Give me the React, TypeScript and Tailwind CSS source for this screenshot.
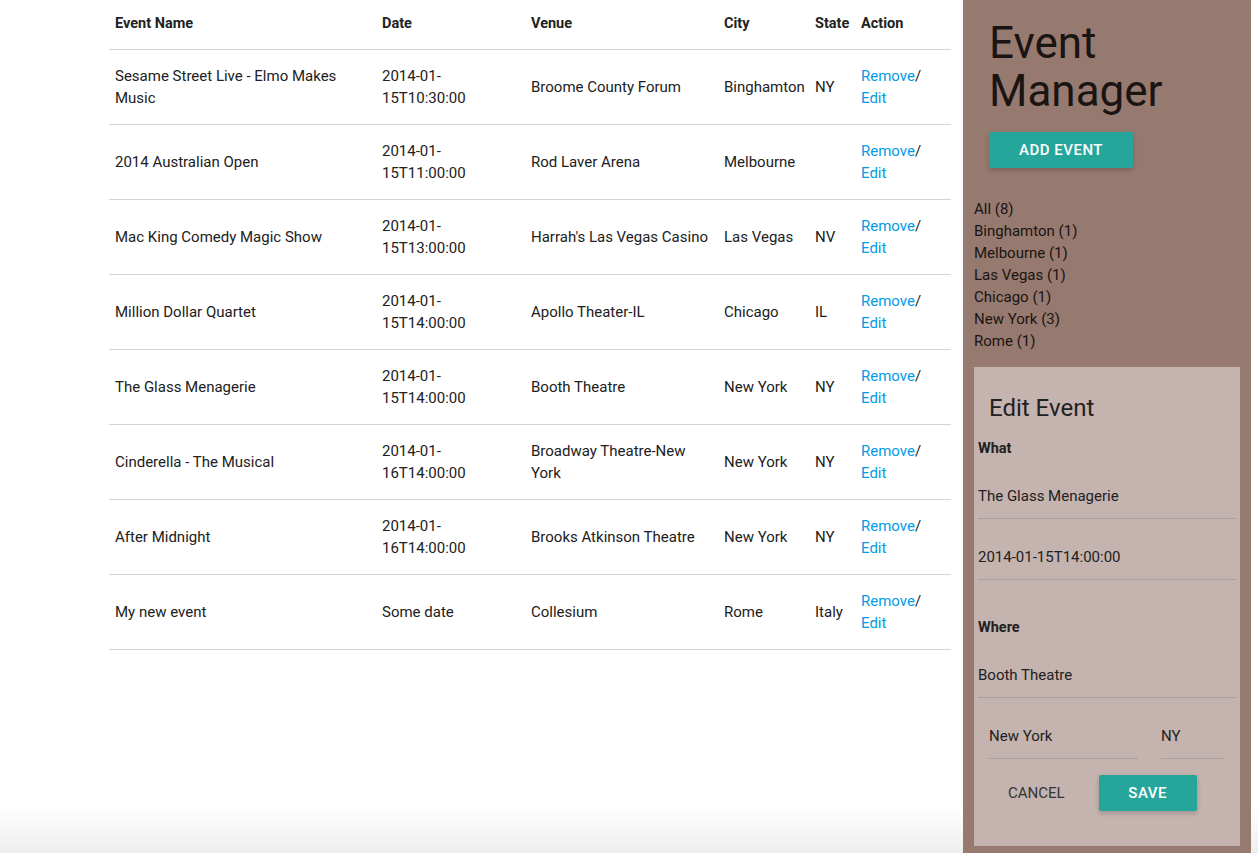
import React from 'react';

type Ev = { name: string; date: [string, string?]; venue: string; city: string; state: string };

const EVENTS: Ev[] = [
  { name: 'Sesame Street Live - Elmo Makes Music', date: ['2014-01-', '15T10:30:00'], venue: 'Broome County Forum', city: 'Binghamton', state: 'NY' },
  { name: '2014 Australian Open', date: ['2014-01-', '15T11:00:00'], venue: 'Rod Laver Arena', city: 'Melbourne', state: '' },
  { name: 'Mac King Comedy Magic Show', date: ['2014-01-', '15T13:00:00'], venue: "Harrah's Las Vegas Casino", city: 'Las Vegas', state: 'NV' },
  { name: 'Million Dollar Quartet', date: ['2014-01-', '15T14:00:00'], venue: 'Apollo Theater-IL', city: 'Chicago', state: 'IL' },
  { name: 'The Glass Menagerie', date: ['2014-01-', '15T14:00:00'], venue: 'Booth Theatre', city: 'New York', state: 'NY' },
  { name: 'Cinderella - The Musical', date: ['2014-01-', '16T14:00:00'], venue: 'Broadway Theatre-New York', city: 'New York', state: 'NY' },
  { name: 'After Midnight', date: ['2014-01-', '16T14:00:00'], venue: 'Brooks Atkinson Theatre', city: 'New York', state: 'NY' },
  { name: 'My new event', date: ['Some date'], venue: 'Collesium', city: 'Rome', state: 'Italy' },
];

const CITIES = ['All (8)', 'Binghamton (1)', 'Melbourne (1)', 'Las Vegas (1)', 'Chicago (1)', 'New York (3)', 'Rome (1)'];

const TextField = ({ value, className = '' }: { value: string; className?: string }) => (
  <div className={`h-[46px] flex items-center border-b border-[#a6a09e] ${className}`}>
    <span className="text-[15px] leading-[22px] text-[#212121]">{value}</span>
  </div>
);

const App: React.FC = () => {
  return (
    <div
      className="w-[1258px] h-[853px] overflow-hidden flex bg-[linear-gradient(to_bottom,#ffffff_94.5%,#eeeeee)] text-[#212121]"
      style={{ fontFamily: 'Roboto, "Liberation Sans", sans-serif' }}
    >
      {/* Event table */}
      <main className="w-[963px] shrink-0 pl-[109px] pr-[12px]">
        <table className="w-[842px] table-fixed border-collapse text-[15px] leading-[22px]">
          <colgroup>
            <col className="w-[267px]" />
            <col className="w-[149px]" />
            <col className="w-[193px]" />
            <col className="w-[91px]" />
            <col className="w-[46px]" />
            <col className="w-[96px]" />
          </colgroup>
          <thead>
            <tr className="border-b border-[#d4d4d4]">
              {['Event Name', 'Date', 'Venue', 'City', 'State', 'Action'].map(h => (
                <th key={h} className="text-left font-bold px-[6px] pt-[13px] pb-[14px] text-[14.5px] text-[#222]">
                  {h}
                </th>
              ))}
            </tr>
          </thead>
          <tbody>
            {EVENTS.map((ev, i) => (
              <tr key={i} className="border-b border-[#d4d4d4] h-[75px]">
                <td className="px-[6px] align-middle">{ev.name}</td>
                <td className="px-[6px] align-middle">
                  {ev.date[0]}
                  {ev.date[1] && (
                    <>
                      <br />
                      {ev.date[1]}
                    </>
                  )}
                </td>
                <td className="px-[6px] align-middle">{ev.venue}</td>
                <td className="px-[6px] align-middle">{ev.city}</td>
                <td className="px-[6px] align-middle">{ev.state}</td>
                <td className="px-[6px] align-middle">
                  <a className="text-[#039be5] cursor-pointer">Remove</a>/
                  <br />
                  <a className="text-[#039be5] cursor-pointer">Edit</a>
                </td>
              </tr>
            ))}
          </tbody>
        </table>
      </main>

      {/* Sidebar */}
      <aside className="w-[288px] shrink-0 h-full bg-[#977a6f] px-[11px] flex flex-col">
        <div className="pl-[15px] pt-[19px]">
          <h1 className="text-[44px] leading-[48px] text-[#1a1412] font-normal">
            Event
            <br />
            Manager
          </h1>
          <button className="mt-[17px] h-[36px] px-[30px] bg-[#26a69a] text-white text-[15px] font-medium tracking-[0.5px] uppercase rounded-[2px] shadow-[0_2px_5px_rgba(0,0,0,0.2)]">
            Add Event
          </button>
        </div>

        <ul className="mt-[30px] text-[15px] leading-[22px] text-[#1a1412]">
          {CITIES.map(c => (
            <li key={c}>{c}</li>
          ))}
        </ul>

        {/* Edit panel */}
        <section className="mt-[15px] mb-[7px] flex-1 bg-[#c4b3af] px-[4px] pt-[28px]">
          <h2 className="pl-[11px] text-[24px] leading-[26px] text-[#212121]">Edit Event</h2>
          <div className="mt-[17px] font-bold text-[14.5px] leading-[22px]">What</div>
          <TextField value="The Glass Menagerie" className="mt-[13px]" />
          <TextField value="2014-01-15T14:00:00" className="mt-[15px]" />
          <div className="mt-[37px] font-bold text-[14.5px] leading-[22px]">Where</div>
          <TextField value="Booth Theatre" className="mt-[13px]" />
          <div className="mt-[15px] flex pl-[11px] gap-[23px]">
            <TextField value="New York" className="w-[149px]" />
            <TextField value="NY" className="w-[63px]" />
          </div>
          <div className="mt-[16px] flex items-center gap-[4px]">
            <button className="h-[36px] px-[30px] text-[15px] uppercase text-[#343434]">Cancel</button>
            <button className="h-[36px] w-[98px] bg-[#26a69a] text-white text-[15px] font-medium tracking-[0.5px] uppercase rounded-[2px] shadow-[0_2px_5px_rgba(0,0,0,0.2)]">
              Save
            </button>
          </div>
        </section>
      </aside>
    </div>
  );
};

export default App;
